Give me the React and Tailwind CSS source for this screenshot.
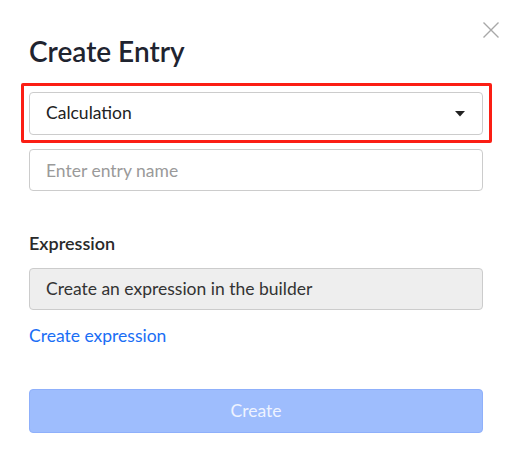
import React, { useState } from "react";

const CreateEntry = () => {
  const [name, setName] = useState("");

  return (
    <div className="relative w-[512px] h-[464px] bg-white font-['Lato','Liberation_Sans',sans-serif] text-[#222]">
      <button className="absolute top-[21px] right-[12px] w-[18px] h-[18px] text-[#a8a8a8]">
        <svg viewBox="0 0 18 18" width="18" height="18" fill="none" stroke="currentColor" strokeWidth="1.4">
          <path d="M1.5 1.5 L16.5 16.5 M16.5 1.5 L1.5 16.5" />
        </svg>
      </button>

      <div className="flex flex-col pl-[29px] pr-[29px] pt-[34px]">
        <h1 className="text-[28px] leading-[34px] font-semibold text-[#1f2430]">Create Entry</h1>

        <div className="relative mt-[24px]">
          <div className="absolute left-[-8px] top-[-9px] right-[-9px] bottom-[-8px] border-[3px] border-[#fb1e14] rounded-[2px] pointer-events-none" />
          <div className="flex items-center justify-between h-[43px] px-4 border border-[#cccccc] rounded-[4px] bg-white">
            <span className="text-[17.5px]">Calculation</span>
            <svg width="10" height="6" viewBox="0 0 10 6" className="mr-[1px]">
              <path d="M0 0 H10 L5 5.5 Z" fill="#222" />
            </svg>
          </div>
        </div>

        <input
          className="mt-[14px] h-[42px] px-4 border border-[#cccccc] rounded-[4px] text-[17.5px] outline-none placeholder:text-[#9a9a9a]"
          placeholder="Enter entry name"
          value={name}
          onChange={(e) => setName(e.target.value)}
        />

        <p className="mt-[41px] text-[18px] leading-[22px] font-semibold text-[#2a2a2a]">Expression</p>

        <div className="mt-[14px] flex items-center h-[42px] px-4 border border-[#cccccc] rounded-[4px] bg-[#eeeeee] text-[17.5px] text-[#333]">
          Create an expression in the builder
        </div>

        <a href="#" className="mt-[15px] self-start text-[17.5px] leading-[22px] text-[#1a6ef5]">
          Create expression
        </a>

        <button className="mt-[42px] h-[44px] rounded-[4px] border border-[#8fb0fb] bg-[#9ebdfd] text-[17.5px] text-[#eef3ff]">
          Create
        </button>
      </div>
    </div>
  );
};

export default function App() {
  return <CreateEntry />;
}
